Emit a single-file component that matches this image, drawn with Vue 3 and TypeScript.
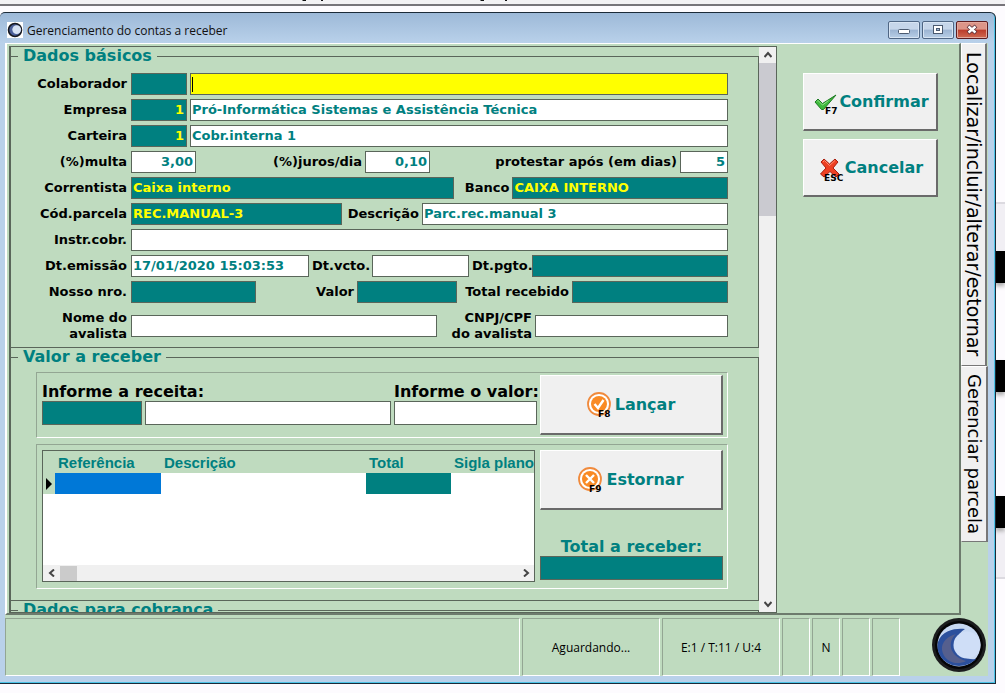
<script setup lang="ts">
import { ref } from 'vue'

interface Field {
  id: string
  label?: string
  aria?: string
  value?: string
  kind: 'teal' | 'white' | 'yellow'
  right?: boolean
}
interface Row {
  name: string
  fields: Field[]
}

const rows = ref<Row[]>([
  { name: 'pair', fields: [
    { id: 'colab', label: 'Colaborador', kind: 'teal' },
    { id: 'colab-nome', aria: 'Nome do colaborador', kind: 'yellow' } ] },
  { name: 'pair', fields: [
    { id: 'empresa', label: 'Empresa', value: '1', kind: 'teal', right: true },
    { id: 'empresa-nome', aria: 'Nome da empresa', value: 'Pró-Informática Sistemas e Assistência Técnica', kind: 'white' } ] },
  { name: 'pair', fields: [
    { id: 'carteira', label: 'Carteira', value: '1', kind: 'teal', right: true },
    { id: 'carteira-nome', aria: 'Nome da carteira', value: 'Cobr.interna 1', kind: 'white' } ] },
  { name: 'rates', fields: [
    { id: 'multa', label: '(%)multa', value: '3,00', kind: 'white', right: true },
    { id: 'juros', label: '(%)juros/dia', value: '0,10', kind: 'white', right: true },
    { id: 'protestar', label: 'protestar após (em dias)', value: '5', kind: 'white', right: true } ] },
  { name: 'account', fields: [
    { id: 'correntista', label: 'Correntista', value: 'Caixa interno', kind: 'teal' },
    { id: 'banco', label: 'Banco', value: 'CAIXA INTERNO', kind: 'teal' } ] },
  { name: 'parcel', fields: [
    { id: 'parcela', label: 'Cód.parcela', value: 'REC.MANUAL-3', kind: 'teal' },
    { id: 'descricao', label: 'Descrição', value: 'Parc.rec.manual 3', kind: 'white' } ] },
  { name: 'single', fields: [
    { id: 'instr', label: 'Instr.cobr.', kind: 'white' } ] },
  { name: 'dates', fields: [
    { id: 'emissao', label: 'Dt.emissão', value: '17/01/2020 15:03:53', kind: 'white' },
    { id: 'vcto', label: 'Dt.vcto.', kind: 'white' },
    { id: 'pgto', label: 'Dt.pgto.', kind: 'teal' } ] },
  { name: 'values', fields: [
    { id: 'nosso', label: 'Nosso nro.', kind: 'teal' },
    { id: 'valor', label: 'Valor', kind: 'teal' },
    { id: 'recebido', label: 'Total recebido', kind: 'teal' } ] },
  { name: 'guarantor', fields: [
    { id: 'avalista', label: 'Nome do\navalista', kind: 'white' },
    { id: 'cnpj', label: 'CNPJ/CPF\ndo avalista', kind: 'white' } ] },
])

const status = ['', 'Aguardando...', 'E:1 / T:11 / U:4', '', 'N', '', '']
</script>

<template>
  <div class="desktop">
    <div class="backdrop" aria-hidden="true">
      <svg class="marks" viewBox="0 0 330 3"><path d="M3 0h3v1h-4zM21 0h2v1h-2zM181 0h3v1h-4zM205 0h2v1h-2z" fill="#111" /></svg>
      <i class="pane p1"></i><i class="pane p2"></i>
      <i class="bar b1"></i><i class="bar b2"></i><i class="bar b3"></i>
    </div>
    <main class="window">
      <header class="titlebar">
        <svg class="app-icon" viewBox="0 0 16 16" aria-hidden="true">
          <rect width="16" height="16" fill="#fff" />
          <circle cx="8" cy="8" r="6.5" fill="#4a5f9a" stroke="#15171d" stroke-width="1.6" />
          <circle cx="9.7" cy="7.6" r="4.4" fill="#d6e2f4" />
        </svg>
        <h1>Gerenciamento do contas a receber</h1>
        <div class="controls">
          <button type="button" aria-label="Minimizar">
            <svg viewBox="0 0 30 16"><rect x="9.5" y="7.5" width="11" height="4" rx="1" fill="#fff" stroke="#4b5a70" /></svg>
          </button>
          <button type="button" aria-label="Maximizar">
            <svg viewBox="0 0 30 16"><rect x="10.5" y="3.5" width="9" height="8" fill="#fff" stroke="#4b5a70" /><rect x="13.5" y="6.5" width="3" height="2" fill="#9fb7d4" stroke="#4b5a70" /></svg>
          </button>
          <button type="button" class="close" aria-label="Fechar">
            <svg viewBox="0 0 30 16"><path d="M11 4l8 7M19 4l-8 7" stroke="#5b3038" stroke-width="4" /><path d="M11.5 4.500l7 6M18.500 4.500l-7 6" stroke="#fff" stroke-width="2.4" /></svg>
          </button>
        </div>
      </header>

      <div class="client">
        <div class="work">
          <section class="page">
            <div class="scroller">
              <div class="forms">
                <fieldset class="basic">
                  <legend>Dados básicos</legend>
                  <div v-for="(row, i) in rows" :key="i" class="row" :class="row.name">
                    <template v-for="f in row.fields" :key="f.id">
                      <label v-if="f.label" :for="f.id">{{ f.label }}</label>
                      <input :id="f.id" v-model="f.value" type="text" :aria-label="f.aria" :class="[f.kind, { right: f.right }]" />
                    </template>
                    <span v-if="i === 0" class="caret" aria-hidden="true"></span>
                  </div>
                </fieldset>

                <fieldset class="receive">
                  <legend>Valor a receber</legend>
                  <div class="panel entry">
                    <div class="entry-fields">
                      <label class="big span" for="receita">Informe a receita:</label>
                      <label class="big" for="valor-receita">Informe o valor:</label>
                      <input id="receita" class="teal" type="text" />
                      <input class="white" type="text" aria-label="Nome da receita" />
                      <input id="valor-receita" class="white" type="text" />
                    </div>
                    <button type="button" class="action">
                      <svg class="ico" viewBox="0 0 24 26" aria-hidden="true">
                        <circle cx="12" cy="12" r="11" fill="#fff" stroke="#f08a3c" stroke-width="1.8" />
                        <circle cx="12" cy="12" r="8" fill="#f98a24" />
                        <path d="M7.500 12l3.500 4 5.500-8" fill="none" stroke="#fff" stroke-width="2.4" />
                        <text x="11" y="25">F8</text>
                      </svg>
                      Lançar
                    </button>
                  </div>

                  <div class="panel list">
                    <div class="grid-box">
                      <table>
                        <thead>
                          <tr><th class="mark"></th><th class="c1">Referência</th><th>Descrição</th><th class="c3">Total</th><th class="c4">Sigla plano</th></tr>
                        </thead>
                        <tbody>
                          <tr><td class="mark"><svg viewBox="0 0 6 12" aria-hidden="true"><path d="M0 0l6 6-6 6z" /></svg></td><td class="selected"></td><td></td><td class="sum"></td><td></td></tr>
                        </tbody>
                      </table>
                      <div class="hscroll">
                        <button type="button" aria-label="Rolar para a esquerda"><svg viewBox="0 0 8 8"><path d="M6 0.500L2 4l4 3.500" /></svg></button>
                        <span class="hthumb"></span>
                        <button type="button" aria-label="Rolar para a direita"><svg viewBox="0 0 8 8"><path d="M2 0.500L6 4 2 7.500" /></svg></button>
                      </div>
                    </div>
                    <div class="totals">
                      <button type="button" class="action">
                        <svg class="ico" viewBox="0 0 24 26" aria-hidden="true">
                          <circle cx="12" cy="12" r="11" fill="#fff" stroke="#f08a3c" stroke-width="1.8" />
                          <circle cx="12" cy="12" r="8" fill="#f98a24" />
                          <path d="M8 8l8 8M16 8l-8 8" fill="none" stroke="#fff" stroke-width="2.4" />
                          <text x="11" y="25">F9</text>
                        </svg>
                        Estornar
                      </button>
                      <label class="big" for="total">Total a receber:</label>
                      <input id="total" class="teal" type="text" />
                    </div>
                  </div>
                </fieldset>

                <fieldset class="billing">
                  <legend>Dados para cobrança</legend>
                </fieldset>
              </div>
              <div class="vscroll">
                <button type="button" aria-label="Rolar para cima"><svg viewBox="0 0 8 8"><path d="M0.500 6L4 2l3.500 4" /></svg></button>
                <span class="vthumb"></span>
                <button type="button" aria-label="Rolar para baixo"><svg viewBox="0 0 8 8"><path d="M0.500 2L4 6l3.500-4" /></svg></button>
              </div>
            </div>
            <aside class="side">
              <button type="button" class="action">
                <svg class="ico" viewBox="0 0 24 26" aria-hidden="true">
                  <path d="M4 13l3-3 4.500 4.500L25 6 12.500 20.500h-2z" fill="#3fba3c" stroke="#1c7a22" stroke-linejoin="round" />
                  <path d="M6 12.500l1-1 4.500 4.500 6-4.500" fill="none" stroke="#93e08a" />
                  <text x="14" y="25">F7</text>
                </svg>
                Confirmar
              </button>
              <button type="button" class="action">
                <svg class="ico" viewBox="0 0 24 26" aria-hidden="true">
                  <path d="M4 7l3-3 5.500 5L18 4l3 3-5 6 6 6-3 3-6-5.500L7 22l-3.500-3L9 13z" fill="#ee4023" stroke="#a8200f" stroke-linejoin="round" />
                  <path d="M6 7l1.500-1.500 5 5 5.500-5" fill="none" stroke="#ff8d6e" />
                  <text x="7" y="26">ESC</text>
                </svg>
                Cancelar
              </button>
            </aside>
          </section>
          <nav class="tabs">
            <button type="button" class="tab">Localizar/incluir/alterar/estornar</button>
            <button type="button" class="tab current">Gerenciar parcela</button>
          </nav>
        </div>
        <footer class="status">
          <span v-for="(s, i) in status" :key="i" class="cell" :class="'s' + i">{{ s }}</span>
          <svg class="logo" viewBox="0 0 54 54" aria-hidden="true">
            <circle cx="27" cy="27" r="27" fill="#1b1c1e" />
            <circle cx="27" cy="27" r="24" fill="#050507" />
            <circle cx="27" cy="27" r="21.5" fill="#c7d8f2" />
            <path d="M33 11C24 10 10 12 6 24c-3 13 8 24 21 24 7 0 13-3 17-7C24 43 16 22 33 11z" fill="#2c509d" />
            <path d="M24 16c-9 8-7 22 10 27-9 5-22 1-24-11-1-8 6-14 14-16z" fill="#555f8e" />
            <circle cx="35" cy="27" r="13.5" fill="#cfdef7" />
          </svg>
        </footer>
      </div>
    </main>
  </div>
</template>

<style>
html, body { margin: 0; background: #fdfbfe; }
</style>

<style scoped>
* { box-sizing: border-box; }
.desktop {
  position: relative;
  display: flex;
  min-height: 100vh;
  padding: 12px 9px 9px 0;
  overflow: hidden;
  font-family: "DejaVu Sans", Verdana, sans-serif;
  font-size: 13px;
}
.backdrop { position: absolute; inset: 0; border-top: 4px solid #f3f2f4; }
.backdrop::before { content: ""; display: block; height: 2px; background: #77757a; }
.marks { position: absolute; left: 300px; top: -4px; width: 330px; height: 3px; }
.pane { position: absolute; right: 0; width: 10px; height: 49px; background: #f1eff4; }
.p1 { top: 198px; border-top: 2px solid #dcdae0; }
.p2 { top: 526px; border-bottom: 2px solid #dcdae0; }
.bar { position: absolute; right: 0; width: 10px; height: 32px; background: #000; box-shadow: 0 3px 4px #aaa; }
.b1 { top: 247px; }
.b2 { top: 356px; }
.b3 { top: 492px; }
.window {
  position: relative;
  flex: 1;
  display: flex;
  flex-direction: column;
  min-width: 0;
  border: 1px solid #1b2a38;
  border-left: 0;
  border-radius: 5px 6px 0 0;
  padding: 0 7px 7px 5px;
  background: linear-gradient(#9db9d8, #b9d1ea 30px, #b9d1ea);
  box-shadow: inset -1px -1px #4cc4e8;
}
.titlebar { display: flex; align-items: center; height: 30px; padding: 4px 0 0 2px; gap: 4px; }
.app-icon { width: 16px; height: 16px; }
h1 { flex: 1; margin: 0; font: 12px "Open Sans", "Noto Sans", sans-serif; color: #111; }
.controls { display: flex; gap: 2px; }
.controls button {
  width: 32px; height: 18px; padding: 0;
  border: 1px solid #4f6684; border-radius: 2px;
  background: linear-gradient(#c6d6ea 45%, #9cb4d2 50%, #b8cee6);
  box-shadow: inset 0 0 0 1px #d7e4f3;
}
.controls .close { background: linear-gradient(#dc9588 45%, #bb3c2b 50%, #cf6a52); border-color: #5c1c20; box-shadow: inset 0 0 0 1px #e3a89c; }
.controls svg { display: block; width: 30px; height: 16px; }
.client { flex: 1; display: flex; flex-direction: column; background: #bfdbbf; }
.work { flex: 1; display: flex; }
.page {
  flex: 1;
  display: flex;
  min-width: 0;
  padding: 2px 0 0 2px;
  border: solid #fff;
  border-width: 1px 2px 2px 2px;
  border-right-color: #6d7b6d;
  border-bottom-color: #6d7b6d;
}
.scroller { flex: 1; display: flex; min-width: 0; border: 1px solid #5a665a; border-left-width: 2px; }
.forms { flex: 1; min-width: 0; height: 565px; overflow: hidden; }
fieldset { display: block; margin: 0; min-width: 0; border: 1px solid #5a665a; border-left: 0; }
legend { padding: 0 5px; margin-left: 7px; font-weight: bold; font-size: 16px; line-height: 18px; color: #008080; }
.basic { padding: 8px 30px 5px 0; }
.receive { padding: 6px 30px 11px 0; }
.billing { padding: 0 0 30px; }
.row { position: relative; display: grid; align-items: center; column-gap: 3px; margin-bottom: 4px; }
.pair { grid-template-columns: 117px 56px 1fr; }
.rates { grid-template-columns: 117px 65px 163px 65px 1fr 48px; }
.account { grid-template-columns: 117px 3fr 52px 2fr; }
.parcel { grid-template-columns: 117px 211px 74px 1fr; }
.single { grid-template-columns: 117px 1fr; }
.dates { grid-template-columns: 117px 178px 57px 97px 57px 1fr; }
.values { grid-template-columns: 117px 125px 95px 100px 109px 1fr; }
.guarantor { grid-template-columns: 117px 306px 92px 1fr; margin: 7px 0 0; }
label { font-weight: bold; text-align: right; white-space: pre; line-height: 16px; color: #000; }
.row label:first-child { padding-right: 1px; }
input {
  width: 100%; min-width: 0; height: 22px; padding: 0 1px 2px;
  border: 1px solid #5a665a; border-radius: 0; outline: 0;
  font: bold 13px "DejaVu Sans", Verdana, sans-serif;
}
.teal { background: #008080; color: #ff0; }
.white { background: #fff; color: #008080; }
.yellow { background: #ff0; }
.right { text-align: right; padding-right: 2px; }
.caret { position: absolute; left: 181px; top: 4px; width: 1px; height: 15px; background: #000; }
.panel { display: flex; margin-left: 25px; border: 1px solid #93a693; border-right-color: #fff; border-bottom-color: #fff; }
.entry { padding: 2px 4px 2px 5px; gap: 3px; }
.entry-fields { flex: 1; display: grid; grid-template-columns: 100px 1fr 143px; column-gap: 3px; align-content: start; padding-top: 7px; }
.entry-fields input, .totals input { height: 24px; }
.big { font-size: 16px; line-height: 19px; text-align: left; }
.span { grid-column: span 2; }
.action {
  display: flex; align-items: center; justify-content: center; gap: 4px; flex: none;
  width: 183px; height: 60px; padding: 0;
  border: solid; border-width: 1px 2px 2px 1px; border-color: #fff #6a6a6a #6a6a6a #fff;
  background: #f0f0f0; color: #008080;
  font: bold 16px "DejaVu Sans", Verdana, sans-serif;
}
.ico { width: 24px; height: 26px; flex: none; overflow: visible; }
.ico text { font: bold 9px "DejaVu Sans", sans-serif; fill: #000; }
.list { margin-top: 6px; padding: 5px 4px 6px 5px; gap: 5px; }
.grid-box { flex: 1; display: flex; flex-direction: column; min-width: 0; height: 132px; border: 1px solid #5a665a; background: #fff; }
table { width: 100%; table-layout: fixed; border-collapse: collapse; }
th { height: 22px; padding: 0 3px; background: #bfdbbf; color: #008080; font: bold 15px "Liberation Sans", Arial, sans-serif; text-align: left; white-space: nowrap; }
td { height: 21px; padding: 0; }
.mark { width: 12px; padding: 0; background: #bfdbbf; }
.mark svg { display: block; width: 6px; height: 12px; margin-left: 3px; }
.c1 { width: 106px; }
.c3 { width: 85px; }
.c4 { width: 83px; }
.selected { background: #0078d7; }
.sum { background: #008080; }
.hscroll { display: flex; align-items: center; height: 16px; margin-top: auto; background: #f0f0f0; }
.hscroll button, .vscroll button { display: flex; align-items: center; justify-content: center; width: 17px; height: 16px; padding: 0; border: 0; background: none; }
.hscroll button:last-child { margin-left: auto; }
.hscroll svg, .vscroll svg { width: 8px; height: 8px; fill: none; stroke: #444; stroke-width: 2; }
.hthumb { width: 17px; height: 15px; background: #cbcbcb; }
.totals { display: flex; flex-direction: column; width: 183px; }
.totals .big { margin-top: auto; text-align: center; color: #008080; }
.totals input { margin-bottom: 2px; }
.vscroll { display: flex; flex-direction: column; width: 17px; background: #f0f0f0; }
.vthumb { height: 153px; background: #cacad0; }
.vscroll button:last-child { margin-top: auto; }
.side { width: 182px; display: flex; flex-direction: column; gap: 8px; padding: 27px 21px 0 26px; }
.side .action { width: 100%; height: 58px; }
.tabs { width: 27px; display: flex; flex-direction: column; align-items: flex-start; }
.tab {
  writing-mode: vertical-rl; width: 26px; padding: 0; height: 323px;
  border: solid; border-width: 1px 2px 1px 1px; border-color: #fff #777 #777 #fff;
  background: #f0f0f0; color: #000; white-space: nowrap;
  font: 19px "DejaVu Sans", Verdana, sans-serif;
}
.current { width: 27px; height: 176px; border-left-color: #f0f0f0; font-size: 18px; }
.status { display: flex; align-items: stretch; height: 61px; gap: 2px; padding: 3px 2px 0 0; font: 12px "Open Sans", "Noto Sans", sans-serif; }
.cell { display: flex; align-items: center; justify-content: center; width: 28px; border: 1px solid #93a693; border-right-color: #fff; border-bottom-color: #fff; }
.s0 { flex: 1; }
.s1 { width: 138px; }
.s2 { width: 118px; }
.logo { width: 54px; height: 54px; margin-left: 30px; }
</style>
